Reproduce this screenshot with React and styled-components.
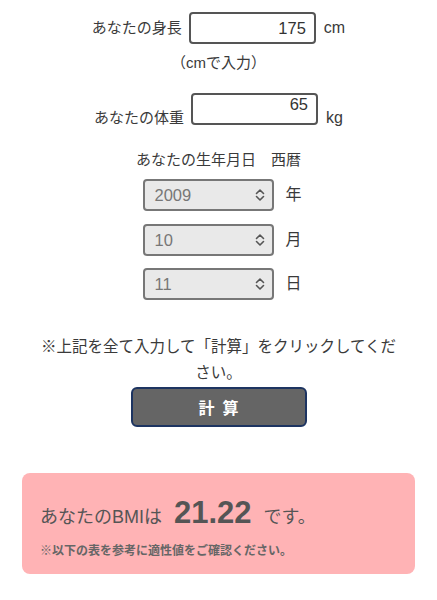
import React from 'react'
import styled, { createGlobalStyle } from 'styled-components'

const GlobalStyle = createGlobalStyle`
  body {
    margin: 0;
    background: #fff;
    font-family: "Liberation Sans", "Noto Sans CJK JP", sans-serif;
    color: #3a3a3a;
  }
`

const Page = styled.div`
  display: flex;
  flex-direction: column;
  align-items: center;
  padding: 12px 22px 0;
`

const Row = styled.div`
  display: flex;
  align-items: ${(p) => (p.$bottom ? 'flex-end' : 'center')};
  justify-content: center;
  margin-top: ${(p) => p.$mt || 0}px;
  padding-left: ${(p) => p.$shift || 0}px;
`

const Label = styled.span`
  font-size: 15px;
  line-height: 20px;
  margin-right: 7px;
  margin-bottom: ${(p) => (p.$drop ? -3 : 0)}px;
`

const Unit = styled.span`
  font-size: 16px;
  line-height: 20px;
  margin-left: ${(p) => p.$ml || 8}px;
  margin-bottom: ${(p) => (p.$drop ? -3 : 0)}px;
`

const NumberInput = styled.input`
  box-sizing: border-box;
  width: 127px;
  height: 32px;
  border: 2px solid #555;
  border-radius: 4px;
  padding: ${(p) => (p.$top ? '2px 8px 12px' : '0 8px')};
  font-family: inherit;
  font-size: 16.5px;
  color: #333;
  text-align: right;
  background: #fff;
  outline: none;
`

const Hint = styled.div`
  font-size: 15px;
  line-height: 20px;
  margin-top: ${(p) => p.$mt || 0}px;
`

const SelectWrap = styled.div`
  position: relative;
  width: 131px;
  height: 32px;
`

const Select = styled.select`
  appearance: none;
  -webkit-appearance: none;
  box-sizing: border-box;
  width: 100%;
  height: 100%;
  border: 2px solid #777;
  border-radius: 4px;
  background: #e9e9e9;
  padding: 0 28px 0 9px;
  font-family: inherit;
  font-size: 16.5px;
  color: #777;
  outline: none;
`

const Chevron = styled.svg`
  position: absolute;
  right: 8px;
  top: 9px;
  pointer-events: none;
`

const Note = styled.p`
  margin: 34px 0 0;
  font-size: 15.5px;
  line-height: 26px;
  text-align: center;
  max-width: 370px;
`

const CalcButton = styled.button`
  box-sizing: border-box;
  width: 176px;
  height: 40px;
  margin-top: 1px;
  border: 2px solid #1d3461;
  border-radius: 6px;
  background: #656565;
  color: #fff;
  font-family: inherit;
  font-size: 16px;
  font-weight: bold;
  letter-spacing: 0.5em;
  text-indent: 0.5em;
`

const ResultBox = styled.div`
  box-sizing: border-box;
  align-self: stretch;
  margin-top: 46px;
  height: 101px;
  background: #ffb3b5;
  border-radius: 8px;
  padding: 22px 18px 0;
  color: #555;
`

const ResultLine = styled.div`
  display: flex;
  align-items: baseline;
  line-height: 36px;
  font-size: 18px;
`

const Bmi = styled.span`
  font-size: 31px;
  font-weight: bold;
  margin: 0 12px;
`

const ResultNote = styled.div`
  margin-top: 7px;
  font-size: 12px;
  line-height: 18px;
  font-weight: bold;
  color: #666;
`

const DateSelect = ({ value, unit, mt }) => (
  <Row $mt={mt} $shift={8}>
    <SelectWrap>
      <Select defaultValue={value}>
        <option value={value}>{value}</option>
      </Select>
      <Chevron width="12" height="14" viewBox="0 0 12 14" fill="none">
        <path d="M2.5 5.5 L6 2 L9.5 5.5 M2.5 8.5 L6 12 L9.5 8.5" stroke="#555" strokeWidth="1.6" strokeLinecap="round" strokeLinejoin="round" />
      </Chevron>
    </SelectWrap>
    <Unit $ml={11}>{unit}</Unit>
  </Row>
)

const App = () => (
  <>
    <GlobalStyle />
    <Page>
      <Row>
        <Label>あなたの身長</Label>
        <NumberInput type="text" defaultValue="175" />
        <Unit>cm</Unit>
      </Row>
      <Hint $mt={9}>（cmで入力）</Hint>
      <Row $bottom $mt={20}>
        <Label $drop>あなたの体重</Label>
        <NumberInput type="text" defaultValue="65" $top />
        <Unit $drop>kg</Unit>
      </Row>
      <Hint $mt={25}>あなたの生年月日　西暦</Hint>
      <DateSelect value="2009" unit="年" mt={9} />
      <DateSelect value="10" unit="月" mt={13} />
      <DateSelect value="11" unit="日" mt={12} />
      <Note>※上記を全て入力して「計算」をクリックしてください。</Note>
      <CalcButton>計算</CalcButton>
      <ResultBox>
        <ResultLine>
          あなたのBMIは<Bmi>21.22</Bmi>です。
        </ResultLine>
        <ResultNote>※以下の表を参考に適性値をご確認ください。</ResultNote>
      </ResultBox>
    </Page>
  </>
)

export default App
